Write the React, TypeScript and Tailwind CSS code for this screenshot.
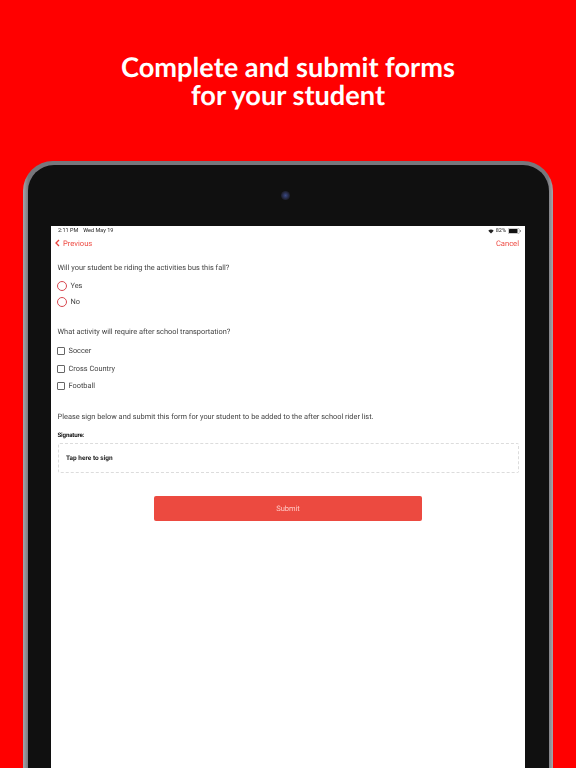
export default function App() {
  const label = "text-[7.4px] leading-[10px] text-[#444]";
  return (
    <div className="w-[576px] h-[768px] overflow-hidden bg-[#ff0000] font-['Roboto',sans-serif] [text-rendering:geometricPrecision]">
      <h1 className="pt-[53px] h-[161px] text-center text-white font-['Lato',sans-serif] font-bold text-[27.2px] leading-[28px]">
        <span className="block">Complete and submit forms</span>
        <span className="block">for your student</span>
      </h1>
      <div className="mx-[23px] h-[640px] rounded-t-[30px] bg-[linear-gradient(90deg,#a5a5aa_0%,#77777c_1%,#77777c_99%,#a5a5aa_100%)] pt-[4px] px-[4.5px] blur-[0.4px]">
        <div className="h-full rounded-t-[26px] bg-[#101010] pt-[61px] px-[23.5px]">
          <div className="absolute left-[257.5px] top-[30px] w-[9px] h-[9px] rounded-full bg-[radial-gradient(circle,#3a4a86_0%,#23253a_55%,#101010_100%)]" />
          <div className="h-full bg-white">
            <div className="flex justify-between items-center h-[10px] pl-[7px] pr-[4px] text-[5.5px] text-[#222]">
              <div className="flex gap-[5px]">
                <span>2:11 PM</span>
                <span>Wed May 19</span>
              </div>
              <div className="flex items-center gap-[2px]">
                <svg width="6" height="5" viewBox="0 0 14 12" fill="#222">
                  <path d="M7 11 0.5 4C4.5 0.5 9.5 0.5 13.5 4Z" />
                </svg>
                <span>82%</span>
                <svg width="13" height="6" viewBox="0 0 26 12">
                  <rect x="0.5" y="0.5" width="22" height="11" rx="2.5" fill="none" stroke="#777" />
                  <rect x="2" y="2" width="17" height="8" rx="1" fill="#111" />
                  <rect x="24" y="4" width="1.5" height="4" fill="#777" />
                </svg>
              </div>
            </div>
            <div className="flex justify-between items-center h-[15px] pl-[4px] pr-[6px] text-[7.6px] text-[#ee4b43]">
              <div className="flex items-center gap-[3px]">
                <svg width="5" height="8" viewBox="0 0 5 8" fill="none" stroke="#e8403a" strokeWidth="1.3">
                  <path d="M4 1 1 4l3 3" />
                </svg>
                <span>Previous</span>
              </div>
              <span>Cancel</span>
            </div>
            <div className="pt-[12px] pl-[6.5px] pr-[6px]">
              <p className={label}>Will your student be riding the activities bus this fall?</p>
              <div className="mt-[8px] flex flex-col gap-[6px]">
                {["Yes", "No"].map((t) => (
                  <div key={t} className="flex items-center gap-[3px] h-[10px] -ml-[1px]">
                    <span className="w-[10px] h-[10px] rounded-full border border-[#d8474f]" />
                    <span className={label + " ml-[1px]"}>{t}</span>
                  </div>
                ))}
              </div>
              <p className={label + " mt-[20px]"}>What activity will require after school transportation?</p>
              <div className="mt-[10px] flex flex-col gap-[9.7px]">
                {["Soccer", "Cross Country", "Football"].map((t) => (
                  <div key={t} className="flex items-center gap-[4px] h-[8px] -ml-[1px]">
                    <span className="w-[8px] h-[8px] rounded-[1px] border border-[#666]" />
                    <span className={label}>{t}</span>
                  </div>
                ))}
              </div>
              <p className={label + " mt-[22px]"}>
                Please sign below and submit this form for your student to be added to the after school rider list.
              </p>
              <p className="mt-[9px] text-[6.2px] leading-[8px] font-bold text-[#111] tracking-[-0.2px]">Signature:</p>
              <div className="mt-[4px] h-[30px] border border-dashed border-[#dcdcdc] rounded-[2px] flex items-center pl-[7.5px] text-[6.5px] font-bold text-[#222]">
                Tap here to sign
              </div>
              <div className="mt-[23px] ml-[96.5px] w-[268px] h-[25px] rounded-[2px] bg-[#ec4a40] flex items-center justify-center text-[7.5px] text-[#ffc9c4]">
                Submit
              </div>
            </div>
          </div>
        </div>
      </div>
    </div>
  );
}
